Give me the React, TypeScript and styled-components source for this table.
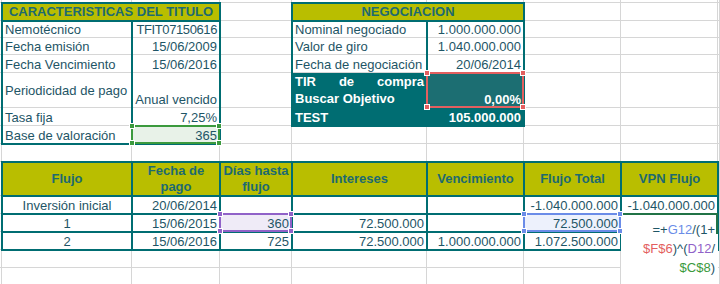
import React from 'react';
import styled, { createGlobalStyle, css } from 'styled-components';

const TEAL = '#006d72';
const OLIVE = '#b9be00';
const INK = '#1e5566';
const HEAD_INK = '#1d6a70';
const GRID = '#d6d6d6';

const SEL = {
  green: { line: '#3b9a3d', fill: '#e8f2e8' },
  red: { line: '#e35f5f', fill: '#1c6e72' },
  purple: { line: '#9062c8', fill: '#efebf7' },
  blue: { line: '#6b8ce8', fill: '#edf1fc' },
};
type SelKind = keyof typeof SEL;

const COLUMNS = '2px 130px 88px 72px 135px 97px 97px 97px 1fr';
const ROWS = '3px 18px 17px 17px 18px 35px 18px 18px 18px 34px 18px 18px 18px 18px 18px';
const CELL_COUNT = 9 * 15;

const GlobalStyle = createGlobalStyle`
  html, body {
    margin: 0;
    padding: 0;
    background: #fff;
  }
  body {
    font-family: "Liberation Sans", Arial, sans-serif;
    font-size: 13px;
    color: ${INK};
    overflow: hidden;
  }
`;

const Sheet = styled.div`
  display: grid;
  width: 720px;
  height: 284px;
  overflow: hidden;
  background: #fff;

  > * {
    grid-area: 1 / 1;
  }
`;

const sheetTracks = css`
  display: grid;
  grid-template-columns: ${COLUMNS};
  grid-template-rows: ${ROWS};
`;

const GridLayer = styled.div`
  ${sheetTracks}
`;

const GridCell = styled.div`
  border-right: 1px solid ${GRID};
  border-bottom: 1px solid ${GRID};
`;

const ContentLayer = styled.div`
  ${sheetTracks}
`;

const Table = styled.div<{ $area: string; $cols: string; $rows: string }>`
  grid-area: ${p => p.$area};
  display: grid;
  grid-template-columns: ${p => p.$cols};
  grid-template-rows: ${p => p.$rows};
  outline: 2px solid ${TEAL};
  outline-offset: -1px;
`;

type Tone = 'plain' | 'head' | 'dark';

const Cell = styled.div<{
  $tone?: Tone;
  $align?: 'left' | 'center' | 'right';
  $valign?: 'center' | 'bottom' | 'top';
  $span?: number;
  $split?: boolean;
  $underline?: boolean;
  $boxed?: boolean;
  $sel?: SelKind;
}>`
  position: ${p => (p.$sel ? 'relative' : 'static')};
  grid-column: span ${p => p.$span ?? 1};
  display: flex;
  min-width: 0;
  align-items: ${p => (p.$valign === 'center' ? 'center' : p.$valign === 'top' ? 'flex-start' : 'flex-end')};
  justify-content: ${p =>
    p.$align === 'right' ? 'flex-end' : p.$align === 'center' ? 'center' : 'flex-start'};
  text-align: ${p => p.$align ?? 'left'};
  padding: 0 3px 1px;
  line-height: 15px;
  white-space: nowrap;
  font-weight: ${p => (p.$tone === 'head' || p.$tone === 'dark' ? 700 : 400)};
  color: ${p => (p.$tone === 'head' ? HEAD_INK : p.$tone === 'dark' ? '#fff' : INK)};
  background: ${p =>
    p.$sel ? SEL[p.$sel].fill : p.$tone === 'head' ? OLIVE : p.$tone === 'dark' ? TEAL : 'transparent'};
  box-shadow: ${p => {
    const shadows: string[] = [];
    if (p.$split) shadows.push(`inset -1px 0 0 ${TEAL}`, `1px 0 0 ${TEAL}`);
    if (p.$underline) shadows.push(`inset 0 -1px 0 ${TEAL}`, `0 1px 0 ${TEAL}`);
    return shadows.length ? shadows.join(', ') : 'none';
  }};
  ${p =>
    p.$boxed &&
    css`
      outline: 2px solid ${TEAL};
      outline-offset: -1px;
    `}
`;

const Tight = styled.span`
  letter-spacing: -0.4px;
`;

const HeadLines = styled.span`
  line-height: 16px;
  white-space: nowrap;
`;

const Justified = styled.span`
  display: block;
  width: 100%;
  white-space: normal;
  text-align: justify;
  line-height: 17px;
`;

const Selection = styled.span<{ $color: string }>`
  position: absolute;
  top: -1px;
  left: -1px;
  right: 0;
  bottom: 0;
  border: 2px solid ${p => p.$color};
  z-index: 3;
  pointer-events: none;
`;

const Handle = styled.span<{ $color: string; $x: 'left' | 'right'; $y: 'top' | 'bottom' }>`
  position: absolute;
  width: 4px;
  height: 4px;
  background: ${p => p.$color};
  border: 1px solid #fff;
  ${p => p.$x}: -4px;
  ${p => p.$y}: -4px;
`;

const FormulaBox = styled.div`
  grid-area: 12 / 8 / 16 / 9;
  position: relative;
  z-index: 2;
  margin-top: -1px;
  background: #fff;
  border-top: 2px solid #217346;
  padding: 5px 3px 0 3px;
  text-align: right;
  line-height: 19px;
  color: ${INK};

  &::after {
    content: '';
    position: absolute;
    top: -2px;
    right: 0;
    width: 2px;
    height: 21px;
    background: #217346;
  }
`;

const Ref = styled.span<{ $kind: SelKind }>`
  color: ${p => SEL[p.$kind].line};
`;

const Marquee: React.FC<{ kind: SelKind }> = ({ kind }) => {
  const color = SEL[kind].line;
  return (
    <Selection $color={color}>
      <Handle $color={color} $x="left" $y="top" />
      <Handle $color={color} $x="right" $y="top" />
      <Handle $color={color} $x="left" $y="bottom" />
      <Handle $color={color} $x="right" $y="bottom" />
    </Selection>
  );
};

const flows = [
  { label: 'Inversión inicial', date: '20/06/2014', days: '', interest: '', maturity: '', total: '-1.040.000.000', npv: '-1.040.000.000' },
  { label: '1', date: '15/06/2015', days: '360', interest: '72.500.000', maturity: '', total: '72.500.000', npv: '' },
  { label: '2', date: '15/06/2016', days: '725', interest: '72.500.000', maturity: '1.000.000.000', total: '1.072.500.000', npv: '' },
];

const App: React.FC = () => {
  return (
    <>
      <GlobalStyle />
      <Sheet>
        <GridLayer>
          {Array.from({ length: CELL_COUNT }, (_, i) => (
            <GridCell key={i} />
          ))}
        </GridLayer>

        <ContentLayer>
          <Table $area="2 / 2 / 9 / 4" $cols="130px 88px" $rows="18px 17px 17px 18px 35px 18px 18px">
            <Cell $tone="head" $span={2} $align="center" $valign="center" $underline>
              CARACTERISTICAS DEL TITULO
            </Cell>
            <Cell $split>Nemotécnico</Cell>
            <Cell $align="right">
              <Tight>TFIT07150616</Tight>
            </Cell>
            <Cell $split>Fecha emisión</Cell>
            <Cell $align="right">15/06/2009</Cell>
            <Cell $split>Fecha Vencimiento</Cell>
            <Cell $align="right">15/06/2016</Cell>
            <Cell $split $valign="center">Periodicidad de pago</Cell>
            <Cell $align="right">Anual vencido</Cell>
            <Cell $split>Tasa fija</Cell>
            <Cell $align="right">7,25%</Cell>
            <Cell $split>Base de valoración</Cell>
            <Cell $align="right" $sel="green">
              365
              <Marquee kind="green" />
            </Cell>
          </Table>

          <Table $area="2 / 5 / 8 / 7" $cols="135px 97px" $rows="18px 17px 17px 18px 35px 18px">
            <Cell $tone="head" $span={2} $align="center" $valign="center" $underline>
              NEGOCIACION
            </Cell>
            <Cell $split>Nominal negociado</Cell>
            <Cell $align="right">1.000.000.000</Cell>
            <Cell $split>Valor de giro</Cell>
            <Cell $align="right">1.040.000.000</Cell>
            <Cell $split>Fecha de negociación</Cell>
            <Cell $align="right">20/06/2014</Cell>
            <Cell $tone="dark" $valign="top">
              <Justified>TIR de compra Buscar Objetivo</Justified>
            </Cell>
            <Cell $tone="dark" $align="right" $sel="red">
              0,00%
              <Marquee kind="red" />
            </Cell>
            <Cell $tone="dark">TEST</Cell>
            <Cell $tone="dark" $align="right">105.000.000</Cell>
          </Table>

          <Table $area="10 / 2 / 14 / 9" $cols="130px 88px 72px 135px 97px 97px 97px" $rows="34px 18px 18px 18px">
            <Cell $tone="head" $boxed $align="center" $valign="center">Flujo</Cell>
            <Cell $tone="head" $boxed $align="center" $valign="center">
              <HeadLines>Fecha de<br />pago</HeadLines>
            </Cell>
            <Cell $tone="head" $boxed $align="center" $valign="center">
              <HeadLines>Días hasta<br />flujo</HeadLines>
            </Cell>
            <Cell $tone="head" $boxed $align="center" $valign="center">Intereses</Cell>
            <Cell $tone="head" $boxed $align="center" $valign="center">Vencimiento</Cell>
            <Cell $tone="head" $boxed $align="center" $valign="center">Flujo Total</Cell>
            <Cell $tone="head" $boxed $align="center" $valign="center">VPN Flujo</Cell>

            {flows.map((f, i) => (
              <React.Fragment key={f.label}>
                <Cell $boxed $align="center">{f.label}</Cell>
                <Cell $boxed $align="right">{f.date}</Cell>
                <Cell $boxed $align="right" $sel={i === 1 ? 'purple' : undefined}>
                  {f.days}
                  {i === 1 && <Marquee kind="purple" />}
                </Cell>
                <Cell $boxed $align="right">{f.interest}</Cell>
                <Cell $boxed $align="right">{f.maturity}</Cell>
                <Cell $boxed $align="right" $sel={i === 1 ? 'blue' : undefined}>
                  {f.total}
                  {i === 1 && <Marquee kind="blue" />}
                </Cell>
                <Cell $boxed $align="right">{f.npv}</Cell>
              </React.Fragment>
            ))}
          </Table>

          <FormulaBox>
            =+<Ref $kind="blue">G12</Ref>/(1+
            <br />
            <Ref $kind="red">$F$6</Ref>)^(<Ref $kind="purple">D12</Ref>/
            <br />
            <Ref $kind="green">$C$8</Ref>)
          </FormulaBox>
        </ContentLayer>
      </Sheet>
    </>
  );
};

export default App;
